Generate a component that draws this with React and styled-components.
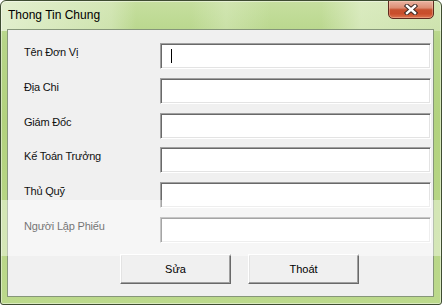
import { Fragment } from "react";
import styled, { createGlobalStyle } from "styled-components";

const GlobalStyle = createGlobalStyle`
	body {
		margin: 0;
		background: #ffffff;
		font-family: "Liberation Sans", Arial, sans-serif;
	}
`;

const Window = styled.div`
	position: relative;
	box-sizing: border-box;
	width: 442px;
	height: 305px;
	display: flex;
	flex-direction: column;
	padding: 0 7px 7px 6px;
	border: 1px solid #3e4c31;
	border-radius: 6px 6px 3px 3px;
	box-shadow: inset 0 0 0 1px rgba(255, 255, 255, 0.45);
	background:
		linear-gradient(90deg, rgba(235, 244, 220, 0.8) 0, rgba(225, 238, 205, 0.5) 110px, rgba(255, 255, 255, 0) 135px, rgba(255, 255, 255, 0) 190px, rgba(230, 242, 212, 0.35) 225px, rgba(255, 255, 255, 0) 270px, rgba(255, 255, 255, 0) 320px, rgba(232, 243, 214, 0.6) 360px, rgba(225, 238, 205, 0.5) 442px) top / 100% 30px no-repeat,
		linear-gradient(180deg, #c6df9f 0, #b6d588 40px, #b2d27e 120px, #bcd98c 305px);
	overflow: hidden;
`;

const TitleBar = styled.div`
	height: 28px;
	display: flex;
	justify-content: space-between;
	align-items: flex-start;
`;

const Title = styled.div`
	padding-left: 1px;
	font-size: 12px;
	line-height: 29px;
	color: #000;
`;

const CloseButton = styled.div`
	box-sizing: border-box;
	width: 46px;
	height: 19px;
	margin-top: -1px;
	display: flex;
	align-items: center;
	justify-content: center;
	border: 1px solid #5e2a1e;
	border-radius: 0 0 5px 5px;
	background: linear-gradient(180deg, #eab4a2 0, #dc8e74 40%, #c7512f 52%, #c94d2b 75%, #dc7550 100%);
	box-shadow: inset 0 0 0 1px rgba(255, 220, 200, 0.35);
`;

const Client = styled.div`
	flex: 1;
	display: flex;
	flex-direction: column;
	border: 1px solid #86967a;
	background: #f0f0f0;
`;

const Form = styled.div`
	display: grid;
	grid-template-columns: 136px 271px;
	grid-auto-rows: 26px;
	row-gap: 8.8px;
	padding: 13px 0 0 16px;
`;

const Label = styled.div`
	padding-top: 3px;
	font-size: 11px;
	line-height: 13px;
	letter-spacing: -0.2px;
	color: #111;
`;

const Field = styled.div`
	box-sizing: border-box;
	height: 26px;
	display: flex;
	align-items: center;
	padding-left: 10px;
	background: #fff;
	border: 1px solid;
	border-color: #a0a0a0 #ffffff #ffffff #a0a0a0;
	box-shadow: inset 1px 1px 0 #696969, inset -1px -1px 0 #e3e3e3;
`;

const Caret = styled.span`
	width: 1px;
	height: 14px;
	background: #000;
`;

const Buttons = styled.div`
	display: flex;
	gap: 17px;
	padding: 11px 0 0 112px;
`;

const Button = styled.button`
	box-sizing: border-box;
	width: 111px;
	height: 30px;
	padding: 0;
	font-family: "Liberation Sans", Arial, sans-serif;
	font-size: 11px;
	color: #000;
	background: #f0f0f0;
	border: 1px solid;
	border-color: #ffffff #696969 #696969 #ffffff;
	box-shadow: inset -1px -1px 0 #a0a0a0, inset 1px 1px 0 #e3e3e3;
`;

const Watermark = styled.div`
	position: absolute;
	left: 0;
	right: 0;
	top: 199px;
	height: 56px;
	background: rgba(255, 255, 255, 0.4);
	pointer-events: none;
`;

const fields = [
	"Tên Đơn Vị",
	"Địa Chi",
	"Giám Đốc",
	"Kế Toán Trưởng",
	"Thủ Quỹ",
	"Người Lập Phiếu",
];

const App = () => {
	return (
		<>
			<GlobalStyle />
			<Window>
				<TitleBar>
					<Title>Thong Tin Chung</Title>
					<CloseButton>
						<svg width="14" height="11" viewBox="0 0 14 11">
							<path d="M3 2 L11 9 M11 2 L3 9" stroke="#3d2a24" strokeWidth="4.4" strokeLinecap="square" />
							<path d="M3 2 L11 9 M11 2 L3 9" stroke="#ffffff" strokeWidth="2.4" strokeLinecap="square" />
						</svg>
					</CloseButton>
				</TitleBar>
				<Client>
					<Form>
						{fields.map((name, i) => (
							<Fragment key={name}>
								<Label>{name}</Label>
								<Field>{i === 0 && <Caret />}</Field>
							</Fragment>
						))}
					</Form>
					<Buttons>
						<Button>Sửa</Button>
						<Button>Thoát</Button>
					</Buttons>
				</Client>
				<Watermark />
			</Window>
		</>
	);
};

export default App;
